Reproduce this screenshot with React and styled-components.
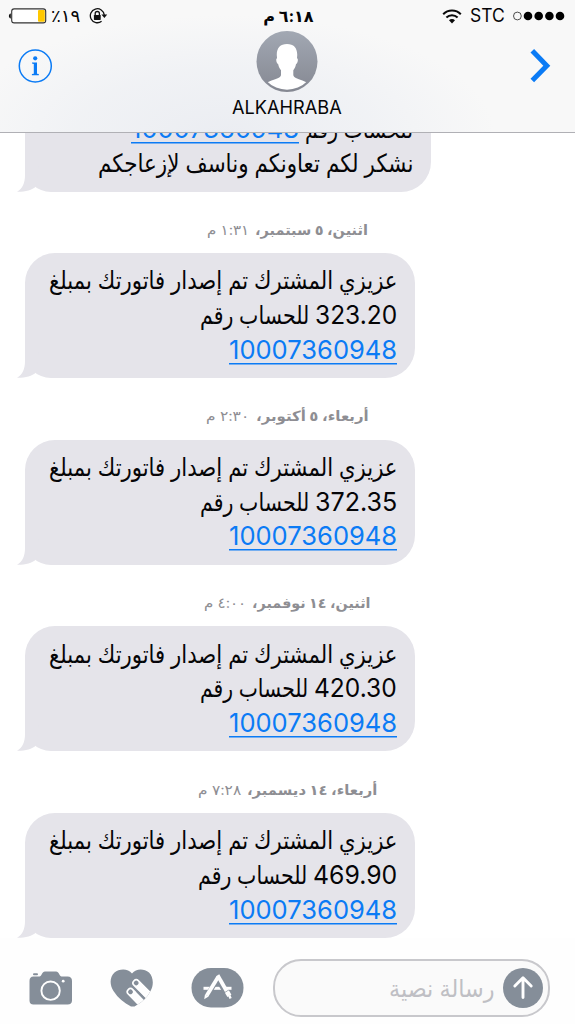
import React, { useLayoutEffect, useRef, useState } from "react";
import styled, { createGlobalStyle } from "styled-components";

const BLUE = "#0b7bf5";
const SLATE = "#858e99";
const BUBBLE = "#e5e4ea";

const GlobalStyle = createGlobalStyle`
  body { margin: 0; background: #fff; }
  * { box-sizing: border-box; }
`;

const Screen = styled.div`
  width: 575px;
  height: 1024px;
  display: flex;
  flex-direction: column;
  overflow: hidden;
  background: #fff;
  color: #050507;
  font-family: Inter, "DejaVu Sans", sans-serif;
`;

/* ---------- text that keeps a given width ---------- */

const FitBox = styled.span`
  display: inline-block;
  width: ${(p) => p.$width}px;
  white-space: nowrap;
  direction: ${(p) => (p.$ltr ? "ltr" : "rtl")};
`;

const FitInner = styled.span`
  display: inline-block;
  transform-origin: ${(p) => (p.$ltr ? "left" : "right")} center;
`;

function Fit({ width, ltr, children, className }) {
  const ref = useRef(null);
  const [scale, setScale] = useState(1);
  useLayoutEffect(() => {
    setScale(width / ref.current.offsetWidth);
  }, [width, children]);
  return (
    <FitBox $width={width} $ltr={ltr} className={className}>
      <FitInner ref={ref} $ltr={ltr} style={{ transform: `scaleX(${scale})` }}>
        {children}
      </FitInner>
    </FitBox>
  );
}

/* ---------- header ---------- */

const Header = styled.header`
  flex: none;
  height: 133px;
  border-bottom: 1px solid #b0b0b5;
  background:
    radial-gradient(ellipse 270px 120px at 225px 135px, #ebedf2 0%, rgba(238, 240, 244, 0.75) 55%, rgba(247, 247, 248, 0) 100%),
    #f8f8f8;
`;

const StatusBar = styled.div`
  height: 31px;
  display: grid;
  grid-template-columns: 1fr auto 1fr;
  align-items: center;
  padding: 1px 10px 0 8px;
`;

const StatusLeft = styled.div`
  display: flex;
  align-items: center;
  gap: 4px;
`;

const StatusRight = styled.div`
  display: flex;
  align-items: center;
  justify-content: flex-end;
  gap: 8px;
`;

const Percent = styled(Fit)`
  font-size: 17px;
  line-height: 24px;
  unicode-bidi: bidi-override;
`;

const Clock = styled(Fit)`
  margin-left: 4px;
  font-size: 16px;
  line-height: 24px;
  font-weight: 700;
`;

const Carrier = styled(Fit)`
  font-size: 18px;
  line-height: 24px;
`;

const LockSlot = styled.span`
  display: flex;
  margin-left: 5px;
`;

const NavBar = styled.div`
  display: grid;
  grid-template-columns: 1fr auto 1fr;
  padding: 0 23px 0 18px;
`;

const NavIcon = styled.div`
  display: flex;
  padding-top: 18px;
  justify-content: ${(p) => (p.$end ? "flex-end" : "flex-start")};
`;

const Contact = styled.div`
  display: flex;
  flex-direction: column;
  align-items: center;
  margin-left: 4px;
`;

const ContactName = styled(Fit)`
  margin-top: 2px;
  height: 26px;
  font-size: 18px;
  line-height: 26px;
`;

/* ---------- messages ---------- */

const Messages = styled.main`
  flex: 1;
  min-height: 0;
  display: flex;
  flex-direction: column;
  justify-content: flex-end;
  overflow: hidden;
  direction: rtl;
`;

const Stamp = styled.div`
  flex: none;
  height: 61.6px;
  display: flex;
  justify-content: center;
  align-items: center;
  gap: 6px;
  padding-top: 14.6px;
  color: #8e8e93;
  font-size: 14px;
  line-height: 20px;
`;

const StampDate = styled(Fit)`
  font-weight: 700;
`;

const Bubble = styled.section`
  position: relative;
  flex: none;
  align-self: flex-end;
  width: ${(p) => p.$width}px;
  height: 125px;
  margin-left: 25px;
  padding: 10.2px 18px 10px 0;
  border-radius: 30px 30px 30px 26px;
  background: ${BUBBLE};
`;

const Tail = styled.svg`
  position: absolute;
  left: -8px;
  bottom: 0;
`;

const Line = styled.div`
  height: 34.7px;
  display: flex;
  align-items: baseline;
  gap: 6px;
  font-size: 25px;
  line-height: 34.7px;
`;

const Amount = styled(Fit)`
  font-size: 26px;
`;

const AccountLink = styled(Fit)`
  height: 30px;
  font-size: 26px;
  color: ${BLUE};
  box-shadow: 0 1.5px 0 ${BLUE};
`;

/* ---------- composer ---------- */

const Composer = styled.footer`
  flex: none;
  height: 86px;
  display: flex;
  align-items: center;
  padding: 14px 25px 0 29px;
  background: #fefefe;
`;

const Tools = styled.div`
  width: 244px;
  display: flex;
  align-items: center;
`;

const ToolSlot = styled.span`
  display: flex;
  margin-right: ${(p) => p.$gap}px;
`;

const Field = styled.div`
  width: 277px;
  height: 58px;
  display: flex;
  align-items: center;
  gap: 8px;
  padding: 0 5px;
  direction: rtl;
  border: 2px solid #c8c8cc;
  border-radius: 28px;
  background: #fafafa;
`;

const Placeholder = styled(Fit)`
  padding-top: 2px;
  color: #bfbfc4;
  font-size: 24px;
  line-height: 40px;
`;

/* ---------- drawings ---------- */

const Battery = () => (
  <svg width="39" height="16" viewBox="0 0 39 16">
    <path d="M2.8 5.5C0.2 6 0.2 10 2.8 10.5Z" fill="#111" />
    <rect x="3.7" y="0.9" width="34" height="14" rx="2.5" fill="#fff" stroke="#333" strokeWidth="1.1" />
    <rect x="30" y="2" width="6.8" height="11.8" rx="1" fill="#ffc800" />
  </svg>
);

const RotationLock = () => (
  <svg width="19" height="16" viewBox="0 0 19 16">
    <path d="M15.3 7A7 7 0 1 0 12.6 13.3" fill="none" stroke="#111" strokeWidth="1.3" />
    <path d="M12.4 6.4h5.8l-2.8 3.6z" fill="#111" />
    <rect x="4.9" y="6.9" width="6.8" height="5" rx="0.6" fill="#111" />
    <path d="M6.2 7.2V5.6a2.1 2.1 0 0 1 4.2 0v1.6" fill="none" stroke="#111" strokeWidth="1.3" />
  </svg>
);

const Wifi = () => (
  <svg width="20" height="15" viewBox="0 0 20 15">
    <g fill="none" stroke="#0a0a0a" strokeWidth="2">
      <path d="M1.2 5.2C6 0.2 14 0.2 18.8 5.2" />
      <path d="M4.4 8.5C7.5 5.4 12.5 5.4 15.6 8.5" />
    </g>
    <path d="M7 11.2C8.6 9.7 11.4 9.7 13 11.2L10 14.4Z" fill="#0a0a0a" />
  </svg>
);

const Signal = () => (
  <svg width="52" height="10" viewBox="0 0 52 10">
    <circle cx="4.4" cy="5" r="3.9" fill="none" stroke="#222" strokeWidth="0.8" />
    {[15, 25.7, 36.4, 47].map((x) => (
      <circle key={x} cx={x} cy="5" r="4.3" fill="#000" />
    ))}
  </svg>
);

const Info = () => (
  <svg width="35" height="35" viewBox="0 0 35 35">
    <circle cx="17.3" cy="17" r="16" fill="none" stroke={BLUE} strokeWidth="1.5" />
    <circle cx="17.2" cy="9.3" r="2.1" fill={BLUE} />
    <path d="M14 13.4h5v11.3l1.8 0.4v1.1h-6.9v-1.1l1.9-.4v-9.6l-1.8-.5z" fill={BLUE} />
  </svg>
);

const Chevron = () => (
  <svg width="22" height="34" viewBox="0 0 22 34">
    <path d="M2.300 1.800L16.800 16.700L2.300 31.600" fill="none" stroke={BLUE} strokeWidth="5" />
  </svg>
);

const Avatar = () => (
  <svg width="62" height="62" viewBox="0 0 62 62">
    <defs>
      <linearGradient id="avatar" x1="0" y1="0" x2="0" y2="1">
        <stop offset="0" stopColor="#a2a8b3" />
        <stop offset="1" stopColor="#858892" />
      </linearGradient>
      <clipPath id="inner"><circle cx="31" cy="30.500" r="28.2" /></clipPath>
    </defs>
    <circle cx="31" cy="30.500" r="30.5" fill="url(#avatar)" />
    <path
      clipPath="url(#inner)"
      fill="#fff"
      d="M31 13C24 13 20.4 17.5 20.8 24.5L21.1 27.2C19.5 27.5 20.3 32 22.2 33.2C22.8 36 23.7 37.8 25 39.2V44.3C24 48 17 48.500 11 51.500L20 62H42L51 51.500C45 48.500 38.300 48 37.300 44.300V39.200C38.500 37.800 39.400 36 40 33.200C41.800 32 42.600 27.500 41 27.200L41.200 24.500C41.600 17.500 38 13 31 13Z"
    />
  </svg>
);

const Camera = () => (
  <svg width="44" height="34" viewBox="0 0 44 34">
    <rect x="4" y="2.200" width="5" height="2" rx="1" fill={SLATE} />
    <path
      fill={SLATE}
      d="M4.500 5.500H10.500C12.500 5.500 13 0.500 16 0.500H27C30 0.500 30.500 5.500 32.500 5.500H38.500Q43 5.500 43 10V29.500Q43 33.500 38.500 33.500H4.500Q0.500 33.500 0.500 29.500V10Q0.500 5.500 4.500 5.500Z"
    />
    <circle cx="21.600" cy="19.700" r="9.200" fill="none" stroke="#fefefe" strokeWidth="1.900" />
    <circle cx="34.200" cy="10.200" r="1.400" fill="#fefefe" />
  </svg>
);

const HeartTouch = () => (
  <svg width="44" height="38" viewBox="0 0 44 38">
    <defs>
      <clipPath id="heart">
        <path d="M22 4.500C18 -1 9 -0.500 4.500 3.500C-0.500 8 -0.500 16 3.500 22C8 29 14 34 21 37.500H24.500C31 34 37 29 40.500 22C44 16 43.500 8 39 3.500C34 -0.500 26 -0.500 22 4.500Z" />
      </clipPath>
    </defs>
    <g clipPath="url(#heart)">
      <rect width="44" height="38" fill={SLATE} />
      <g stroke="#fefefe" strokeLinecap="round">
        <path d="M26.200 14L45 33" strokeWidth="8" />
        <path d="M20.500 22.800L36 38.500" strokeWidth="8" />
      </g>
      <path d="M27 22.300L35.500 31" stroke={SLATE} strokeWidth="2" />
      <g fill={SLATE}>
        <rect x="-2.300" y="-2.300" width="4.600" height="4.600" rx="2" transform="translate(26.200 14) rotate(-45)" />
        <rect x="-2.300" y="-2.300" width="4.600" height="4.600" rx="2" transform="translate(20.500 22.800) rotate(-45)" />
      </g>
    </g>
  </svg>
);

const AppStore = () => (
  <svg width="53" height="40" viewBox="0 0 53 40">
    <rect x="0.500" y="0" width="52" height="39.500" rx="19.500" fill={SLATE} />
    <path d="M12.500 20.300H40.500" stroke="#fefefe" strokeWidth="3" />
    <path d="M26 12L15.500 28.500" stroke={SLATE} strokeWidth="5" />
    <path d="M26 10L36 27" stroke={SLATE} strokeWidth="5" />
    <path d="M26.800 9.500L15.800 27.500" stroke="#fefefe" strokeWidth="3.800" />
    <path d="M14 26.200L17.600 28.400L13.200 31.200Z" fill="#fefefe" />
    <path d="M26.600 7.300L35.600 23" stroke="#fefefe" strokeWidth="3.800" />
    <path d="M35.900 23.500L38.400 27.900" stroke="#fefefe" strokeWidth="4.600" />
    <path d="M38.300 27.500L39.600 30.500" stroke="#fefefe" strokeWidth="2.400" />
  </svg>
);

const Send = () => (
  <svg width="40" height="40" viewBox="0 0 40 40">
    <circle cx="20" cy="20" r="20" fill={SLATE} />
    <path d="M20 29.500V10.500M11.800 18L20 9.800L28.200 18" fill="none" stroke="#fff" strokeWidth="2.900" strokeLinecap="round" strokeLinejoin="round" />
  </svg>
);

const BubbleTail = () => (
  <Tail width="30" height="26" viewBox="0 0 30 26">
    <path d="M8 0V9C8 17 5.500 23 0 25.800C8 26 15 24 19 20.500L22 0Z" fill={BUBBLE} />
  </Tail>
);

/* ---------- data ---------- */

const ACCOUNT = "10007360948";

const BILLS = [
  { date: "اثنين، ٥ سبتمبر،", dateW: 113, time: "١:٣١ م", timeW: 42, amount: "323.20", restW: 109, amountW: 82 },
  { date: "أربعاء، ٥ أكتوبر،", dateW: 113, time: "٢:٣٠ م", timeW: 43, amount: "372.35", restW: 109, amountW: 82 },
  { date: "اثنين، ١٤ نوفمبر،", dateW: 118, time: "٤:٠٠ م", timeW: 42, amount: "420.30", restW: 108, amountW: 83 },
  { date: "أربعاء، ١٤ ديسمبر،", dateW: 130, time: "٧:٢٨ م", timeW: 43, amount: "469.90", restW: 109, amountW: 84 },
];

function Bill({ bill }) {
  return (
    <>
      <Stamp>
        <StampDate width={bill.dateW}>{bill.date}</StampDate>
        <Fit width={bill.timeW}>{bill.time}</Fit>
      </Stamp>
      <Bubble $width={390}>
        <Line><Fit width={348}>عزيزي المشترك تم إصدار فاتورتك بمبلغ</Fit></Line>
        <Line>
          <Amount width={bill.amountW} ltr>{bill.amount}</Amount>
          <Fit width={bill.restW}>للحساب رقم</Fit>
        </Line>
        <Line><AccountLink width={168} ltr>{ACCOUNT}</AccountLink></Line>
        <BubbleTail />
      </Bubble>
    </>
  );
}

export default function App() {
  return (
    <Screen>
      <GlobalStyle />
      <Header>
        <StatusBar>
          <StatusLeft>
            <Battery />
            <Percent width={29} ltr>٪١٩</Percent>
            <LockSlot><RotationLock /></LockSlot>
          </StatusLeft>
          <Clock width={50}>٦:١٨ م</Clock>
          <StatusRight>
            <Wifi />
            <Carrier width={35} ltr>STC</Carrier>
            <Signal />
          </StatusRight>
        </StatusBar>
        <NavBar>
          <NavIcon><Info /></NavIcon>
          <Contact>
            <Avatar />
            <ContactName width={110} ltr>ALKAHRABA</ContactName>
          </Contact>
          <NavIcon $end><Chevron /></NavIcon>
        </NavBar>
      </Header>
      <Messages>
        <Bubble $width={406}>
          <Line />
          <Line>
            <Fit width={108}>للحساب رقم</Fit>
            <AccountLink width={168} ltr>{ACCOUNT}</AccountLink>
          </Line>
          <Line><Fit width={315}>نشكر لكم تعاونكم وناسف لإزعاجكم</Fit></Line>
          <BubbleTail />
        </Bubble>
        {BILLS.map((bill) => <Bill key={bill.amount} bill={bill} />)}
      </Messages>
      <Composer>
        <Tools>
          <ToolSlot $gap={37}><Camera /></ToolSlot>
          <ToolSlot $gap={37}><HeartTouch /></ToolSlot>
          <ToolSlot $gap={0}><AppStore /></ToolSlot>
        </Tools>
        <Field>
          <Send />
          <Placeholder width={106}>رسالة نصية</Placeholder>
        </Field>
      </Composer>
    </Screen>
  );
}
